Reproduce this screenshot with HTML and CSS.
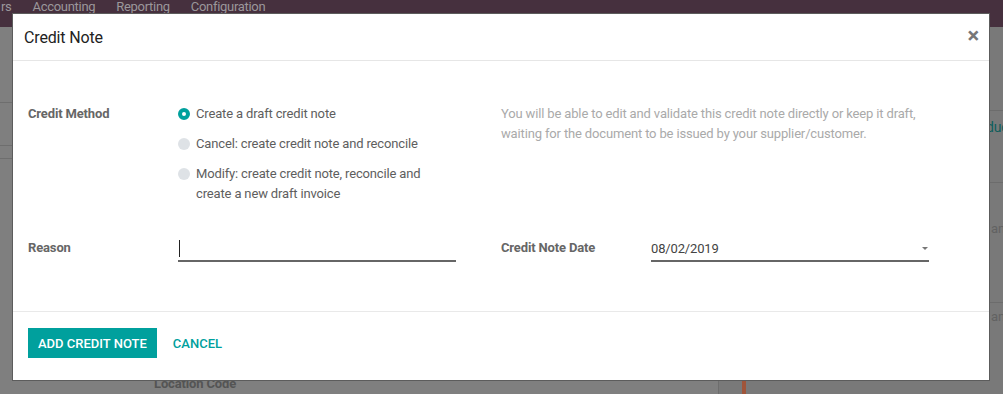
FILE: index.html
```html
<!DOCTYPE html>
<html lang="en">
  <head>
    <meta charset="UTF-8" />
    <meta name="viewport" content="width=device-width, initial-scale=1.0" />
    <title>Credit Note</title>
    <link rel="stylesheet" href="styles.css">
  </head>

  <body>
    <!-- dimmed page behind the dialog -->
    <div class="page">
      <header class="topbar">
        <nav class="menu">
          <span>rs</span>
          <span>Accounting</span>
          <span>Reporting</span>
          <span>Configuration</span>
        </nav>
      </header>

      <div class="page-body">
        <main class="sheet">
          <div class="sheet-row" style="height: 75px"></div>
          <div class="sheet-row" style="height: 42px"></div>
          <div class="sheet-row" style="height: 12px"></div>
          <div class="sheet-field">Location Code</div>
        </main>

        <aside class="side">
          <div class="timeline"></div>
          <div class="side-list">
            <div class="side-row" style="height: 84px"></div>
            <div class="side-row side-title" style="height: 72px">Product</div>
            <div class="side-row side-text" style="height: 120px">and</div>
            <div class="side-row side-text side-last">and</div>
          </div>
        </aside>
      </div>
    </div>

    <!-- credit note dialog -->
    <div class="modal">
      <div class="modal-header">
        <h4 class="modal-title">Credit Note</h4>
        <span class="close">×</span>
      </div>

      <div class="modal-body">
        <div class="form-grid">
          <div class="group">
            <label class="form-label">Credit Method</label>
            <div class="radios">
              <div class="radio checked">
                <span class="dot"></span>
                <span class="radio-text">Create a draft credit note</span>
              </div>
              <div class="radio">
                <span class="dot"></span>
                <span class="radio-text">Cancel: create credit note and reconcile</span>
              </div>
              <div class="radio">
                <span class="dot"></span>
                <span class="radio-text">Modify: create credit note, reconcile and create a new draft invoice</span>
              </div>
            </div>
          </div>

          <div class="group">
            <p class="help">
              You will be able to edit and validate this credit note directly or keep it draft,
              waiting for the document to be issued by your supplier/customer.
            </p>
          </div>

          <div class="group row2">
            <label class="form-label">Reason</label>
            <div class="field"><span class="caret-line"></span></div>
          </div>

          <div class="group row2">
            <label class="form-label">Credit Note Date</label>
            <div class="field date">
              <span>08/02/2019</span>
              <span class="arrow"></span>
            </div>
          </div>
        </div>
      </div>

      <div class="modal-footer">
        <button class="btn btn-primary">Add Credit Note</button>
        <button class="btn btn-link">Cancel</button>
      </div>
    </div>
  </body>
</html>
```

FILE: styles.css
```css
/* global */
body {
  margin: 0;
  font-family: Roboto, "Noto Sans", "Liberation Sans", sans-serif;
  font-size: 13px;
  letter-spacing: -0.15px;
  background: #7f7f7f;
  width: 1003px;
  height: 394px;
  overflow: hidden;
  position: relative;
}

/* page behind the dialog (already dimmed) */
.page {
  display: flex;
  flex-direction: column;
  height: 394px;
}

.topbar {
  height: 27px;
  background: #46303e;
  flex: none;
}

.menu {
  display: flex;
  gap: 21px;
  line-height: 13px;
  color: #9b979b;
  font-size: 13px;
  letter-spacing: -0.3px;
  margin-left: 1px;
}

.page-body {
  flex: 1;
  display: flex;
}

.sheet {
  width: 718px;
  flex: none;
  display: flex;
  flex-direction: column;
  border-right: 1px solid #6d6d6d;
  background: #7f7f7f;
}

.sheet-row {
  border-bottom: 1px solid #6e6e6e;
}

.sheet-field {
  margin-top: 215px;
  padding-left: 154px;
  line-height: 20px;
  font-weight: bold;
  color: #545454;
}

.side {
  flex: 1;
  display: flex;
  background: #797979;
}

.timeline {
  margin-left: 23px;
  width: 4px;
  background: #a0553a;
}

.side-list {
  flex: 1;
  display: flex;
  flex-direction: column;
}

.side-row {
  border-bottom: 1px solid #6c6c6c;
  box-sizing: border-box;
}

.side-title {
  padding: 8px 0 0 219px;
  color: #0d5e5c;
  font-size: 14px;
}

.side-text {
  padding: 38px 0 0 245px;
  color: #626262;
}

.side-last {
  flex: 1;
  padding-top: 6px;
  border-bottom: 0;
}

/* dialog */
.modal {
  position: absolute;
  top: 13px;
  left: 12px;
  width: 978px;
  height: 368px;
  box-sizing: border-box;
  background: #ffffff;
  border: 1px solid #5c5c5c;
  display: flex;
  flex-direction: column;
}

.modal-header {
  height: 46px;
  display: flex;
  align-items: center;
  justify-content: space-between;
  padding: 0 10px 0 11px;
  border-bottom: 1px solid #e6e6e6;
}

.modal-title {
  margin: 0;
  font-size: 16px;
  font-weight: normal;
  color: #222222;
}

.close {
  font-size: 22px;
  font-weight: bold;
  color: #777777;
  line-height: 1;
  margin-top: -2px;
}

.modal-body {
  padding: 43px 15px 49px 15px;
}

.form-grid {
  display: grid;
  grid-template-columns: 428px 428px;
  column-gap: 45px;
  row-gap: 32px;
}

.group {
  display: grid;
  grid-template-columns: 150px 278px;
  align-items: start;
}

.form-label {
  line-height: 20px;
  font-weight: bold;
  color: #666666;
}

.row2 .form-label {
  padding-top: 2px;
}

/* radio list */
.radios {
  display: flex;
  flex-direction: column;
  gap: 10px;
}

.radio {
  display: flex;
  align-items: flex-start;
  line-height: 20px;
  color: #5e5e5e;
}

.dot {
  width: 12px;
  height: 12px;
  border-radius: 50%;
  background: #dee2e6;
  margin: 4px 6px 0 0;
  flex: none;
  box-sizing: border-box;
}

.radio.checked .dot {
  background: #ffffff;
  border: 4px solid #00a09d;
}

.help {
  grid-column: 1 / -1;
  margin: 0;
  line-height: 19.5px;
  color: #aaaaaa;
}

/* inputs */
.field {
  height: 24px;
  border-bottom: 2px solid #666666;
  display: flex;
  align-items: center;
  color: #444444;
}

.caret-line {
  width: 1px;
  height: 17px;
  background: #222222;
  margin-left: 1px;
}

.date {
  justify-content: space-between;
  padding-right: 1px;
  font-size: 13px;
}

.arrow {
  width: 0;
  height: 0;
  border-left: 3px solid transparent;
  border-right: 3px solid transparent;
  border-top: 3px solid #777777;
}

/* footer */
.modal-footer {
  border-top: 1px solid #e9e9e9;
  padding: 16px 15px 21px 15px;
  display: flex;
  gap: 6px;
}

.btn {
  height: 30px;
  padding: 0 10px;
  border: 0;
  font-family: inherit;
  font-size: 13px;
  font-weight: 500;
  letter-spacing: 0;
  text-transform: uppercase;
  cursor: pointer;
}

.btn-primary {
  background: #00a09d;
  color: #ffffff;
}

.btn-link {
  background: none;
  color: #00a09d;
}
```
